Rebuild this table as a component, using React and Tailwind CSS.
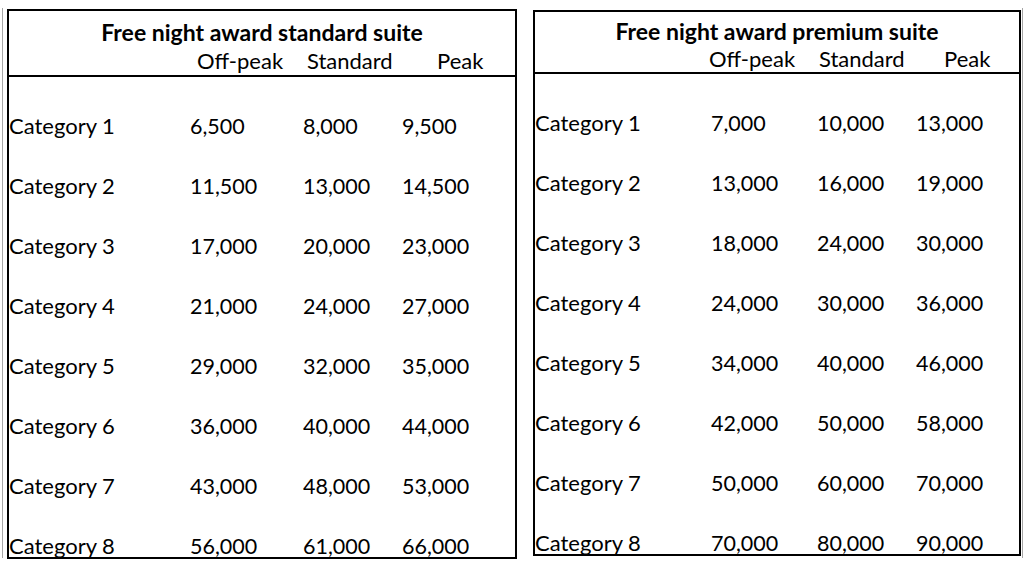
import React from 'react';

const standard = [
  ['Category 1', '6,500', '8,000', '9,500'],
  ['Category 2', '11,500', '13,000', '14,500'],
  ['Category 3', '17,000', '20,000', '23,000'],
  ['Category 4', '21,000', '24,000', '27,000'],
  ['Category 5', '29,000', '32,000', '35,000'],
  ['Category 6', '36,000', '40,000', '44,000'],
  ['Category 7', '43,000', '48,000', '53,000'],
  ['Category 8', '56,000', '61,000', '66,000'],
];

const premium = [
  ['Category 1', '7,000', '10,000', '13,000'],
  ['Category 2', '13,000', '16,000', '19,000'],
  ['Category 3', '18,000', '24,000', '30,000'],
  ['Category 4', '24,000', '30,000', '36,000'],
  ['Category 5', '34,000', '40,000', '46,000'],
  ['Category 6', '42,000', '50,000', '58,000'],
  ['Category 7', '50,000', '60,000', '70,000'],
  ['Category 8', '70,000', '80,000', '90,000'],
];

const App = () => {
  return (
    <div
      className="w-[1024px] h-[570px] bg-white text-black flex overflow-hidden"
      style={{ fontFamily: 'Lato, "Open Sans", sans-serif' }}
    >
      {/* grey edge of neighbouring cell */}
      <div className="ml-[2px] mt-[8px] w-px h-[550px] bg-[#a6a6a6]" />

      {/* Standard suite */}
      <div className="ml-[4px] mt-[9px] w-[510px] h-[550px] border-2 border-black flex flex-col">
        <div className="h-[66px] border-b-2 border-black flex flex-col">
          <div className="pt-[8px] text-center text-[23px] font-bold leading-[26px]">
            Free night award standard suite
          </div>
          <div className="flex text-[22px] leading-[26px] pt-[3px]">
            <span className="ml-[188px] w-[110px]">Off-peak</span>
            <span className="w-[130px]">Standard</span>
            <span>Peak</span>
          </div>
        </div>
        <div className="flex-1 flex flex-col">
          {standard.map((r) => (
            <div key={r[0]} className="flex-1 flex items-end text-[21.5px] leading-[22px]">
              <span className="w-[181px] text-[22px]">{r[0]}</span>
              <span className="w-[113px]">{r[1]}</span>
              <span className="w-[99px]">{r[2]}</span>
              <span>{r[3]}</span>
            </div>
          ))}
        </div>
      </div>

      {/* Premium suite */}
      <div className="ml-[16px] mt-[10px] w-[488px] h-[546px] border-2 border-black flex flex-col">
        <div className="h-[62px] border-b-2 border-black flex flex-col">
          <div className="pt-[6px] text-center text-[23px] font-bold leading-[26px]">
            Free night award premium suite
          </div>
          <div className="flex text-[22px] leading-[26px] pt-[2px]">
            <span className="ml-[174px] w-[110px]">Off-peak</span>
            <span className="w-[125px]">Standard</span>
            <span>Peak</span>
          </div>
        </div>
        <div className="flex-1 flex flex-col">
          {premium.map((r) => (
            <div key={r[0]} className="flex-1 flex items-end text-[21.5px] leading-[22px]">
              <span className="w-[176px] text-[22px]">{r[0]}</span>
              <span className="w-[106px]">{r[1]}</span>
              <span className="w-[99px]">{r[2]}</span>
              <span>{r[3]}</span>
            </div>
          ))}
        </div>
      </div>
      <div className="mt-[8px] ml-[1px] w-px h-[550px] bg-[#a6a6a6]" />
    </div>
  );
};

export default App;
